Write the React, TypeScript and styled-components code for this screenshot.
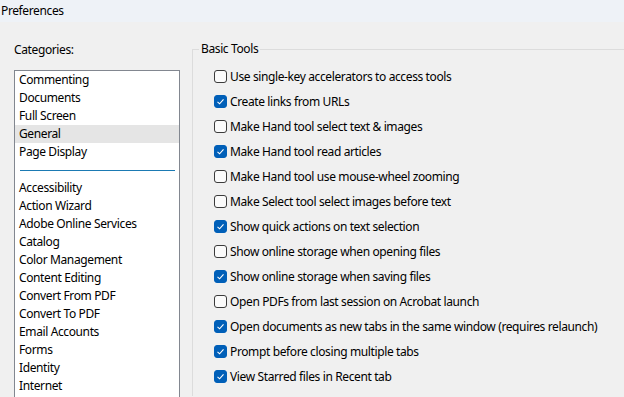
import React from 'react';
import styled, { createGlobalStyle } from 'styled-components';

const GlobalStyle = createGlobalStyle`
  html, body {
    margin: 0;
    padding: 0;
    background: #f0f0f0;
    overflow: hidden;
  }
  body {
    font-family: 'Noto Sans', 'Open Sans', sans-serif;
    font-size: 12px;
    letter-spacing: -0.38px;
    color: #000;
  }
`;

const Window = styled.div`
  width: 624px;
  height: 397px;
  display: flex;
  flex-direction: column;
  background: #f0f0f0;
  overflow: hidden;
`;

const TitleBar = styled.div`
  height: 22px;
  flex-shrink: 0;
  display: flex;
  align-items: center;
  padding-left: 1px;
  background: #eef2f7;
  line-height: 16px;
`;

const Body = styled.div`
  flex: 1;
  display: flex;
  padding: 20px 0 0 14px;
  min-height: 0;
`;

const LeftColumn = styled.div`
  width: 166px;
  display: flex;
  flex-direction: column;
  flex-shrink: 0;
`;

const Label = styled.div`
  line-height: 16px;
  margin-bottom: 12px;
`;

const ListBox = styled.div`
  flex: 1;
  background: #fff;
  border: 1px solid #828790;
  border-bottom: none;
  display: flex;
  flex-direction: column;
`;

const ListItem = styled.div<{ $selected?: boolean }>`
  height: 18px;
  line-height: 18px;
  padding-left: 4px;
  white-space: nowrap;
  background: ${(p) => (p.$selected ? '#e5e5e5' : 'transparent')};
`;

const ListSeparator = styled.div`
  height: 1px;
  margin: 9px 4px 8px 5px;
  background: #1b7ab3;
`;

const Group = styled.fieldset`
  flex: 1;
  margin: 0 0 0 12px;
  padding: 0 0 0 6px;
  border: 1px solid #dcdcdc;
  border-right: none;
  border-bottom: none;
  min-width: 0;
  position: relative;
  top: -1px;
`;

const Legend = styled.legend`
  padding: 0 2px;
  line-height: 16px;
`;

const OptionList = styled.div`
  display: flex;
  flex-direction: column;
  padding: 7px 0 0 15px;
`;

const OptionRow = styled.label`
  height: 25px;
  display: flex;
  align-items: center;
  gap: 3px;
  white-space: nowrap;
`;

const Box = styled.span<{ $checked: boolean }>`
  width: 13px;
  height: 13px;
  box-sizing: border-box;
  border-radius: 3px;
  flex-shrink: 0;
  display: flex;
  align-items: center;
  justify-content: center;
  border: 1px solid ${(p) => (p.$checked ? '#005fb8' : '#3b3b3b')};
  background: ${(p) => (p.$checked ? '#005fb8' : '#fbfbfb')};
`;

const categoriesTop = ['Commenting', 'Documents', 'Full Screen', 'General', 'Page Display'];
const categoriesBottom = [
  'Accessibility',
  'Action Wizard',
  'Adobe Online Services',
  'Catalog',
  'Color Management',
  'Content Editing',
  'Convert From PDF',
  'Convert To PDF',
  'Email Accounts',
  'Forms',
  'Identity',
  'Internet',
];

const options: [string, boolean][] = [
  ['Use single-key accelerators to access tools', false],
  ['Create links from URLs', true],
  ['Make Hand tool select text & images', false],
  ['Make Hand tool read articles', true],
  ['Make Hand tool use mouse-wheel zooming', false],
  ['Make Select tool select images before text', false],
  ['Show quick actions on text selection', true],
  ['Show online storage when opening files', false],
  ['Show online storage when saving files', true],
  ['Open PDFs from last session on Acrobat launch', false],
  ['Open documents as new tabs in the same window (requires relaunch)', true],
  ['Prompt before closing multiple tabs', true],
  ['View Starred files in Recent tab', true],
];

function CheckBox({ checked }: { checked: boolean }) {
  return (
    <Box $checked={checked}>
      {checked && (
        <svg width="9" height="9" viewBox="0 0 9 9">
          <polyline points="1.5,4.8 3.6,6.8 7.5,2.3" fill="none" stroke="#fff" strokeWidth="1.1" />
        </svg>
      )}
    </Box>
  );
}

export default function App() {
  return (
    <Window>
      <GlobalStyle />
      <TitleBar>Preferences</TitleBar>
      <Body>
        <LeftColumn>
          <Label>Categories:</Label>
          <ListBox>
            {categoriesTop.map((c) => (
              <ListItem key={c} $selected={c === 'General'}>
                {c}
              </ListItem>
            ))}
            <ListSeparator />
            {categoriesBottom.map((c) => (
              <ListItem key={c}>{c}</ListItem>
            ))}
          </ListBox>
        </LeftColumn>
        <Group>
          <Legend>Basic Tools</Legend>
          <OptionList>
            {options.map(([text, checked]) => (
              <OptionRow key={text}>
                <CheckBox checked={checked} />
                {text}
              </OptionRow>
            ))}
          </OptionList>
        </Group>
      </Body>
    </Window>
  );
}
